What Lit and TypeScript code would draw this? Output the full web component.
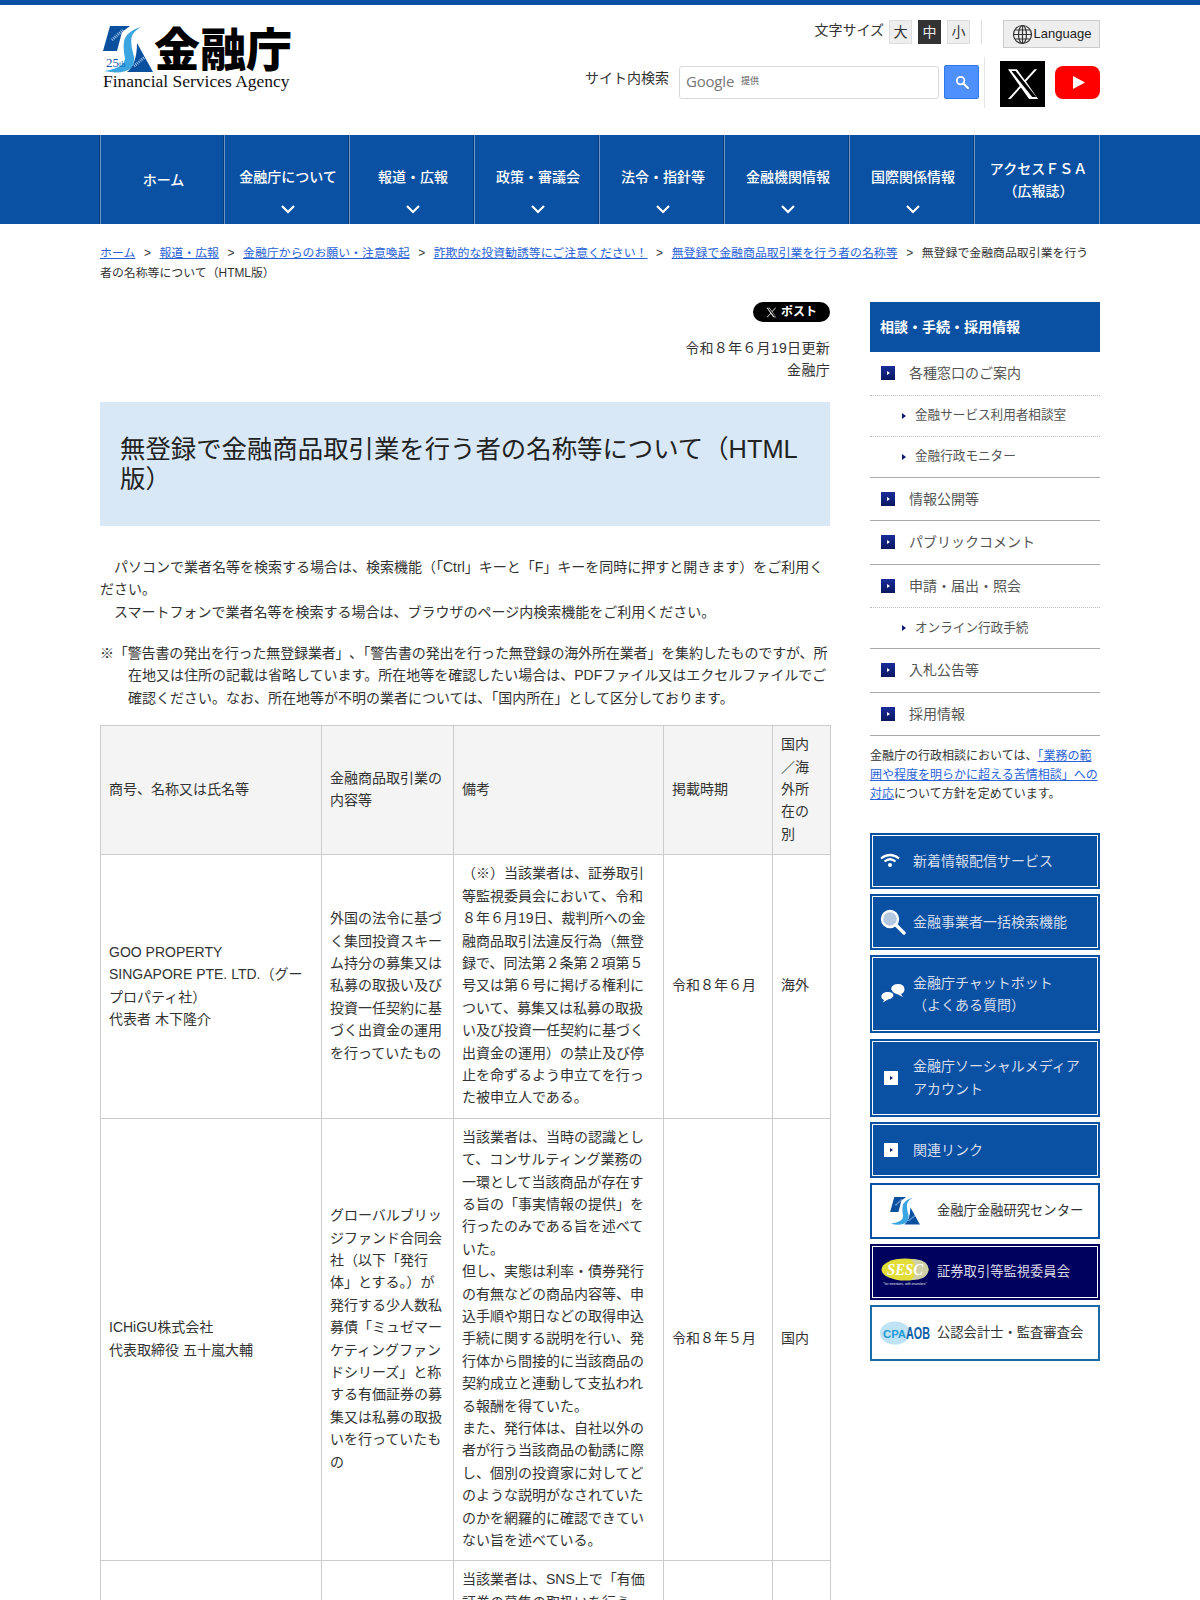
import { LitElement, html, css, svg } from "lit";
import { customElement } from "lit/decorators.js";

const NAV = [
  { label: "ホーム", home: true },
  { label: "金融庁について" },
  { label: "報道・広報" },
  { label: "政策・審議会" },
  { label: "法令・指針等" },
  { label: "金融機関情報" },
  { label: "国際関係情報" },
  { label: "アクセスＦＳＡ\n（広報誌）", plain: true },
];

const CRUMBS = [
  "ホーム",
  "報道・広報",
  "金融庁からのお願い・注意喚起",
  "詐欺的な投資勧誘等にご注意ください！",
  "無登録で金融商品取引業を行う者の名称等",
];

const SIDE_MENU = [
  { label: "各種窓口のご案内", line: "dot" },
  { label: "金融サービス利用者相談室", sub: true, line: "dot" },
  { label: "金融行政モニター", sub: true, line: "solid" },
  { label: "情報公開等", line: "solid" },
  { label: "パブリックコメント", line: "solid" },
  { label: "申請・届出・照会", line: "dot" },
  { label: "オンライン行政手続", sub: true, line: "solid" },
  { label: "入札公告等", line: "solid" },
  { label: "採用情報", line: "solid" },
];

const logoMark = (w: number, h: number, anniversary = false) => html`<svg width=${w} height=${h} viewBox="0 0 50 47">
  <path d="M7 0H27L19 6L14 25H0Z" fill="#0b4f9f"/>
  <path d="M34 17L50 46H24Q34 38 34 17Z" fill="#0b4f9f"/>
  <path d="M9 14L20 4M31 40L42 31" stroke="#9cc4e8" stroke-width="3" stroke-dasharray="1 1" fill="none"/>
  <path d="M38 1Q22 6 21 16Q20 24 22 32Q22 42 1 45Q20 49 28 42Q33 36 30 27Q27 16 29 10Q31 5 38 1Z" fill="#3aa5e0"/>
  ${anniversary
    ? svg`<text x="3" y="41" font-size="13" fill="#1558b0" font-family="Liberation Serif, serif">25<tspan font-size="8">th</tspan></text>`
    : ""}
</svg>`;

const searchIcon = svg`<circle cx="8" cy="8" r="5.4" fill="none" stroke="#fff" stroke-width="2.6"/><path d="M12 12L18.5 18.5" stroke="#fff" stroke-width="3" stroke-linecap="round"/>`;

const xPath = "M14.1 10.3 22 1.5h-1.9l-6.9 7.6L7.7 1.5H1.4l8.3 11.9-8.3 9.1h1.9l7.2-8 5.8 8h6.3zM3.9 2.9h2.9l14.6 18.3h-2.9z";

@customElement("app-root")
export class AppRoot extends LitElement {
  static styles = css`
    :host {
      display: block;
      height: 1600px;
      overflow: hidden;
      background: #fff;
      color: #333;
      font-family: "Liberation Sans", "Noto Sans CJK JP", sans-serif;
      font-size: 14px;
      line-height: 22.4px;
    }

    .topline {
      height: 5px;
      background: #0b51a3;
    }

    .wrap {
      width: 1000px;
      margin-left: 100px;
    }

    /* header */
    .header {
      height: 130px;
      display: flex;
      justify-content: space-between;
    }

    .logo {
      margin: 20px 0 0 3px;
      width: 192px;
    }

    .logo-top {
      display: flex;
      align-items: flex-end;
      height: 48px;
      gap: 1px;
    }

    .logo-name {
      font-size: 46px;
      line-height: 46px;
      font-weight: 900;
      color: #000;
      white-space: nowrap;
    }

    .logo-en {
      font-family: "Liberation Serif", serif;
      font-size: 17.5px;
      line-height: 16px;
      color: #111;
      white-space: nowrap;
    }

    .tools {
      width: 515px;
      display: flex;
      flex-direction: column;
      align-items: flex-end;
    }

    .row-a {
      display: flex;
      align-items: flex-start;
      margin-top: 15px;
      height: 37px;
    }

    .fs-label {
      font-size: 14px;
      line-height: 20px;
      margin-right: 5px;
    }

    .fs-btn {
      width: 23px;
      height: 24px;
      box-sizing: border-box;
      border: 1px solid #ddd;
      background: #eee;
      color: #333;
      font-size: 14px;
      line-height: 22px;
      text-align: center;
      margin-right: 6px;
    }

    .fs-btn.on {
      background: #333;
      border-color: #333;
      color: #eee;
    }

    .fs-sep {
      width: 1px;
      height: 24px;
      background: #ddd;
      margin: 0 21px 0 5px;
    }

    .lang {
      width: 97px;
      height: 28px;
      box-sizing: border-box;
      border: 1px solid #ccc;
      background: #eee;
      display: flex;
      align-items: center;
      justify-content: center;
      gap: 1px;
      font-size: 13px;
      color: #222;
    }

    .row-b {
      display: flex;
      align-items: flex-start;
    }

    .search-label {
      font-size: 14px;
      line-height: 22px;
      margin: 10px 10px 0 0;
      white-space: nowrap;
    }

    .search-box {
      width: 260px;
      height: 33px;
      box-sizing: border-box;
      margin-top: 9px;
      border: 1px solid #d9d9d9;
      border-radius: 3px;
      display: flex;
      align-items: center;
      padding: 0 0 3px 6px;
      color: #777;
    }

    .search-g {
      font-family: "Open Sans", sans-serif;
      font-size: 15px;
      font-weight: 500;
      letter-spacing: -0.2px;
    }

    .search-by {
      font-size: 9px;
      margin-left: 7px;
      font-weight: 500;
    }

    .search-btn {
      width: 35px;
      height: 34px;
      margin: 8px 5px 0 5px;
      background: #4d90fe;
      border: 1px solid #3079ed;
      box-sizing: border-box;
      border-radius: 2px;
      display: flex;
      align-items: center;
      justify-content: center;
    }

    .row-sep {
      width: 1px;
      height: 51px;
      background: #e5e5e5;
      margin-right: 15px;
    }

    .x-ico {
      width: 45px;
      height: 46px;
      background: #000;
      margin: 4px 10px 0 0;
      display: flex;
      align-items: center;
      justify-content: center;
    }

    .yt {
      width: 45px;
      height: 33px;
      margin-top: 9px;
      display: block;
    }

    /* global nav */
    .nav {
      background: #0b51a3;
      height: 89px;
    }

    .nav-in {
      display: grid;
      grid-template-columns: 124px repeat(6, 125px) 126px;
      height: 89px;
      border-right: 1px solid #6d96c6;
      width: 1000px;
      box-sizing: border-box;
    }

    .nav-item {
      border-left: 1px solid #6d96c6;
      box-shadow: -1px 0 0 #073c7c;
      color: #fff;
      font-size: 14px;
      font-weight: 500;
      display: flex;
      flex-direction: column;
      align-items: center;
      text-align: center;
      padding: 32px 0 0 2px;
      box-sizing: border-box;
      line-height: 20px;
    }

    .nav-item.home {
      padding-top: 35px;
    }

    .nav-item.plain {
      padding-top: 23px;
      white-space: pre-line;
      line-height: 22px;
    }

    .nav-item svg {
      margin-top: 18px;
    }

    /* breadcrumb */
    .crumbs {
      font-size: 11.9px;
      line-height: 19.5px;
      margin-top: 20px;
      color: #333;
    }

    .crumbs a,
    .note a {
      color: #2a62d6;
      text-decoration: underline;
    }

    .crumbs .gt {
      margin: 0 8.6px;
    }

    /* columns */
    .cols {
      display: grid;
      grid-template-columns: 730px 230px;
      column-gap: 40px;
      margin-top: 19px;
    }

    .post-row {
      display: flex;
      justify-content: flex-end;
    }

    .post {
      width: 77px;
      height: 20px;
      border-radius: 10px;
      background: #000;
      color: #fff;
      font-size: 12px;
      font-weight: 700;
      line-height: 20px;
      display: flex;
      align-items: center;
      justify-content: center;
      gap: 4px;
    }

    .meta {
      text-align: right;
      margin-top: 15px;
      letter-spacing: 0.3px;
    }

    h1 {
      margin: 20px 0 0;
      padding: 32px 20px 32px;
      background: #d8e8f6;
      font-size: 25.4px;
      line-height: 30px;
      font-weight: 400;
      color: #222;
    }

    .lead {
      margin: 30px 0 0;
    }

    .lead div {
      text-indent: 14px;
    }

    .notice {
      margin: 19px 0 16px;
      padding-left: 28px;
      text-indent: -28px;
    }

    .notice::first-line {
      letter-spacing: -0.14px;
    }

    table {
      width: 730px;
      table-layout: fixed;
      border-collapse: collapse;
      color: #333;
    }

    th,
    td {
      border: 1px solid #ccc;
      padding: 7px 8px 9px;
      font-weight: 400;
      text-align: left;
      vertical-align: middle;
    }

    th {
      background: #f4f4f4;
    }

    .tall {
      height: 520px;
      vertical-align: top;
    }

    .c1 { width: 221px; }
    .c2 { width: 132px; }
    .c3 { width: 210px; }
    .c4 { width: 109px; }
    .c5 { width: 58px; }

    /* side */
    .side-head {
      height: 50px;
      background: #0b51a3;
      color: #fff;
      font-weight: 700;
      font-size: 14px;
      line-height: 50px;
      padding-left: 10px;
    }

    .side-item {
      height: 43.5px;
      box-sizing: border-box;
      display: flex;
      align-items: center;
      color: #555;
      padding-left: 11px;
      gap: 14px;
    }

    .side-item.dot {
      border-bottom: 1px dotted #bbb;
    }

    .side-item.solid {
      border-bottom: 1px solid #aaa;
    }

    .side-item.sub {
      height: 41px;
      padding-left: 32px;
      gap: 9px;
      font-size: 12.6px;
    }

    .sq {
      width: 14px;
      height: 14px;
      background: linear-gradient(#1a2d9a, #0a1660);
      flex: none;
      display: flex;
      align-items: center;
      justify-content: center;
    }

    .sq::after,
    .white-sq::after {
      content: "";
      border-left: 3px solid #fff;
      border-top: 2.5px solid transparent;
      border-bottom: 2.5px solid transparent;
    }

    .tri {
      flex: none;
      border-left: 4px solid #101a70;
      border-top: 3px solid transparent;
      border-bottom: 3px solid transparent;
    }

    .note {
      font-size: 12px;
      line-height: 19px;
      margin: 11px 0 0;
      color: #333;
    }

    .banners {
      display: flex;
      flex-direction: column;
      gap: 5.5px;
      margin-top: 29px;
    }

    .bn {
      height: 55.5px;
      box-sizing: border-box;
      border: 2px solid #0b51a3;
      display: flex;
      align-items: center;
      background: #0b51a3;
      box-shadow: inset 0 0 0 1px #fff;
      color: #d3deee;
      font-size: 14px;
      padding-left: 8px;
    }

    .bn.tall-bn {
      height: 78px;
    }

    .bn-ico {
      width: 33px;
      flex: none;
      display: flex;
      justify-content: flex-start;
      align-items: center;
    }

    .white-sq {
      width: 14px;
      height: 14px;
      background: #fff;
      margin-left: 4px;
      display: flex;
      align-items: center;
      justify-content: center;
    }

    .white-sq::after {
      border-left-color: #101a70;
    }

    .bn.light {
      background: #fff;
      box-shadow: none;
      color: #333;
      font-size: 13.3px;
    }

    .bn.light.aob {
      border-color: #1c6aa6;
    }

    .bn.sesc {
      background: #00005e;
      color: #d8d8e8;
      font-size: 13.3px;
      border-color: #00005e;
    }

    .bn-logo {
      width: 50px;
      margin-right: 7px;
      flex: none;
      display: flex;
      justify-content: center;
      align-items: center;
    }
  `;

  render() {
    return html`
      <div class="topline"></div>
      ${this.renderHeader()} ${this.renderNav()}
      <div class="wrap">
        <div class="crumbs">
          ${CRUMBS.map((c) => html`<a>${c}</a><span class="gt">&gt;</span>`)}無登録で金融商品取引業を行う者の名称等について（HTML版）
        </div>
        <div class="cols">
          <main>${this.renderMain()}</main>
          <aside>${this.renderSide()}</aside>
        </div>
      </div>
    `;
  }

  renderHeader() {
    return html`
      <div class="wrap header">
        <div class="logo">
          <div class="logo-top">
            ${logoMark(50, 47, true)}
            <div class="logo-name">金融庁</div>
          </div>
          <div class="logo-en">Financial Services Agency</div>
        </div>
        <div class="tools">
          <div class="row-a">
            <span class="fs-label">文字サイズ</span>
            <div class="fs-btn">大</div>
            <div class="fs-btn on">中</div>
            <div class="fs-btn">小</div>
            <div class="fs-sep"></div>
            <div class="lang">
              <svg width="21" height="21" viewBox="0 0 21 21" fill="none" stroke="#333" stroke-width="1.2">
                <circle cx="10.5" cy="10.5" r="9" />
                <ellipse cx="10.5" cy="10.5" rx="4" ry="9" />
                <path d="M10.5 1.5V19.5M1.5 10.5H19.5M3 6H18M3 15H18" />
              </svg>
              Language
            </div>
          </div>
          <div class="row-b">
            <span class="search-label">サイト内検索</span>
            <div class="search-box">
              <span class="search-g">Google</span><span class="search-by">提供</span>
            </div>
            <div class="search-btn">
              <svg width="14" height="14" viewBox="0 0 20 20">${searchIcon}</svg>
            </div>
            <div class="row-sep"></div>
            <div class="x-ico">
              <svg width="34" height="34" viewBox="0 0 24 24"><path fill="#fff" d=${xPath} /></svg>
            </div>
            <svg class="yt" viewBox="0 0 45 33">
              <rect width="45" height="33" rx="8" fill="#f00" />
              <path d="M18 10L30 16.5L18 23Z" fill="#fff" />
            </svg>
          </div>
        </div>
      </div>
    `;
  }

  renderNav() {
    return html`
      <div class="nav">
        <div class="wrap nav-in">
          ${NAV.map(
            (n) => html`
              <div class="nav-item ${n.home ? "home" : ""} ${n.plain ? "plain" : ""}">
                ${n.label}
                ${n.home || n.plain
                  ? ""
                  : html`<svg width="14" height="9" viewBox="0 0 14 9">
                      <path d="M1 1L7 7L13 1" fill="none" stroke="#fff" stroke-width="2.2" />
                    </svg>`}
              </div>
            `
          )}
        </div>
      </div>
    `;
  }

  renderMain() {
    return html`
      <div class="post-row">
        <div class="post">
          <svg width="11" height="11" viewBox="0 0 24 24"><path fill="#fff" d=${xPath} /></svg>
          ポスト
        </div>
      </div>
      <div class="meta">令和８年６月19日更新<br />金融庁</div>
      <h1>無登録で金融商品取引業を行う者の名称等について（HTML版）</h1>
      <div class="lead">
        <div>パソコンで業者名等を検索する場合は、検索機能（「Ctrl」キーと「F」キーを同時に押すと開きます）をご利用ください。</div>
        <div>スマートフォンで業者名等を検索する場合は、ブラウザのページ内検索機能をご利用ください。</div>
      </div>
      <div class="notice">
        ※「警告書の発出を行った無登録業者」､「警告書の発出を行った無登録の海外所在業者」を集約したものですが、所在地又は住所の記載は省略しています。所在地等を確認したい場合は、PDFファイル又はエクセルファイルでご確認ください。なお、所在地等が不明の業者については、「国内所在」として区分しております。
      </div>
      <table>
        <colgroup>
          <col class="c1" /><col class="c2" /><col class="c3" /><col class="c4" /><col class="c5" />
        </colgroup>
        <tr>
          <th>商号、名称又は氏名等</th>
          <th>金融商品取引業の内容等</th>
          <th>備考</th>
          <th>掲載時期</th>
          <th>国内／海外所在の別</th>
        </tr>
        <tr>
          <td>GOO PROPERTY<br />SINGAPORE PTE. LTD.（グープロパティ社）<br />代表者 木下隆介</td>
          <td>外国の法令に基づく集団投資スキーム持分の募集又は私募の取扱い及び投資一任契約に基づく出資金の運用を行っていたもの</td>
          <td>（※）当該業者は、証券取引等監視委員会において、令和８年６月19日、裁判所への金融商品取引法違反行為（無登録で、同法第２条第２項第５号又は第６号に掲げる権利について、募集又は私募の取扱い及び投資一任契約に基づく出資金の運用）の禁止及び停止を命ずるよう申立てを行った被申立人である。</td>
          <td>令和８年６月</td>
          <td>海外</td>
        </tr>
        <tr>
          <td>ICHiGU株式会社<br />代表取締役 五十嵐大輔</td>
          <td>グローバルブリッジファンド合同会社（以下「発行体」とする。）が発行する少人数私募債「ミュゼマーケティングファンドシリーズ」と称する有価証券の募集又は私募の取扱いを行っていたもの</td>
          <td>
            当該業者は、当時の認識として、コンサルティング業務の一環として当該商品が存在する旨の「事実情報の提供」を行ったのみである旨を述べていた。<br />
            但し、実態は利率・債券発行の有無などの商品内容等、申込手順や期日などの取得申込手続に関する説明を行い、発行体から間接的に当該商品の契約成立と連動して支払われる報酬を得ていた。<br />
            また、発行体は、自社以外の者が行う当該商品の勧誘に際し、個別の投資家に対してどのような説明がなされていたのかを網羅的に確認できていない旨を述べている。
          </td>
          <td>令和８年５月</td>
          <td>国内</td>
        </tr>
        <tr>
          <td></td>
          <td></td>
          <td class="tall">当該業者は、SNS上で「有価証券の募集の取扱いを行う</td>
          <td></td>
          <td></td>
        </tr>
      </table>
    `;
  }

  renderSide() {
    return html`
      <div class="side-head">相談・手続・採用情報</div>
      ${SIDE_MENU.map(
        (m) => html`
          <div class="side-item ${m.line} ${m.sub ? "sub" : ""}">
            ${m.sub ? html`<span class="tri"></span>` : html`<span class="sq"></span>`}
            ${m.label}
          </div>
        `
      )}
      <p class="note">
        金融庁の行政相談においては、<a>「業務の範囲や程度を明らかに超える苦情相談」への対応</a>について方針を定めています。
      </p>
      <div class="banners">
        <div class="bn">
          <span class="bn-ico">
            <svg width="20" height="15" viewBox="0 0 20 15" fill="none" stroke="#fff" stroke-width="2.2">
              <path d="M1 5.5Q10 -1.5 19 5.5M4.5 8.5Q10 4 15.5 8.5" />
              <circle cx="10" cy="12" r="2" fill="#fff" stroke="none" />
            </svg>
          </span>
          新着情報配信サービス
        </div>
        <div class="bn">
          <span class="bn-ico">
            <svg width="26" height="26" viewBox="0 0 26 26">
              <circle cx="10" cy="10" r="8" fill="#b4c8e0" stroke="#fff" stroke-width="2.4" />
              <path d="M16 16L24 24" stroke="#fff" stroke-width="3.4" stroke-linecap="round" />
            </svg>
          </span>
          金融事業者一括検索機能
        </div>
        <div class="bn tall-bn">
          <span class="bn-ico">
            <svg width="25" height="20" viewBox="0 0 25 20" fill="#fff">
              <path d="M11 5Q12 0 18 0Q24 0 24.5 5Q24.5 9 21 10L23 13L18 10.5Q14 9 13 8Z" />
              <path d="M1 14Q0 9 6 7.5Q13 7 14 11Q13.5 15 8 16L2 19.5L3.5 16Q1.5 15.5 1 14Z" stroke="#0b51a3" />
            </svg>
          </span>
          <div>金融庁チャットボット<br />（よくある質問）</div>
        </div>
        <div class="bn tall-bn">
          <span class="bn-ico"><span class="white-sq"></span></span>
          <div>金融庁ソーシャルメディア<br />アカウント</div>
        </div>
        <div class="bn">
          <span class="bn-ico"><span class="white-sq"></span></span>
          関連リンク
        </div>
        <div class="bn light">
          <span class="bn-logo">${logoMark(30, 28)}</span>
          金融庁金融研究センター
        </div>
        <div class="bn sesc">
          <span class="bn-logo">
            <svg width="48" height="28" viewBox="0 0 48 28">
              <ellipse cx="24" cy="11.5" rx="23.5" ry="11" fill="#e3dd3a" />
              <path d="M30 1Q47 1 47.5 11.5Q47 22 30 22Q40 12 30 1Z" fill="#cfcfa8" />
              <text x="24" y="17" text-anchor="middle" font-size="16" font-weight="700" font-style="italic" fill="#fff" font-family="Liberation Serif, serif" textLength="36" lengthAdjust="spacingAndGlyphs">SESC</text>
              <text x="24" y="27" text-anchor="middle" font-size="3.4" fill="#e8e8f0" font-family="Liberation Sans, sans-serif">"for investors, with investors"</text>
            </svg>
          </span>
          証券取引等監視委員会
        </div>
        <div class="bn light aob">
          <span class="bn-logo">
            <svg width="50" height="24" viewBox="0 0 50 24">
              <ellipse cx="15" cy="12" rx="15" ry="11.5" fill="#bfe3f5" />
              <text x="3" y="17" font-size="11.5" font-weight="700" fill="#1f9ad6" font-family="Liberation Sans, sans-serif" textLength="23" lengthAdjust="spacingAndGlyphs">CPA</text>
              <text x="26" y="18" font-size="16" font-weight="700" fill="#0d5ea8" font-family="Liberation Sans, sans-serif" textLength="24" lengthAdjust="spacingAndGlyphs">AOB</text>
            </svg>
          </span>
          公認会計士・監査審査会
        </div>
      </div>
    `;
  }
}
